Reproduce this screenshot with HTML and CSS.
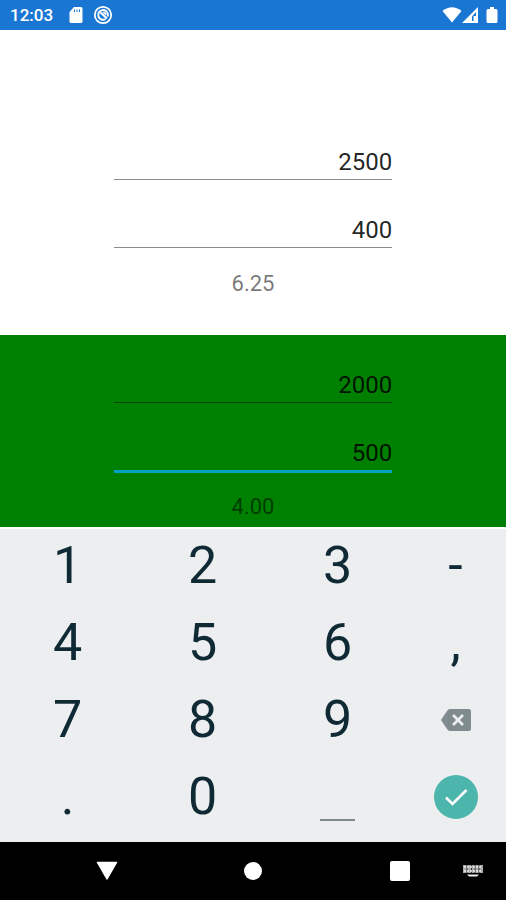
FILE: index.html
```html
<!DOCTYPE html>
<html lang="en">
<head>
<meta charset="utf-8">
<meta name="viewport" content="width=device-width, initial-scale=1">
<title>Division</title>
<link rel="stylesheet" href="styles.css">
</head>
<body>
<header class="status">
  <time class="clock">12:03</time>
  <svg class="status-icon" width="14" height="16" viewBox="0 0 14 16" aria-hidden="true"><path fill="#fff" fill-rule="evenodd" d="M5 0h7q1.500 0 1.500 1.500v13q0 1.500-1.500 1.500H2q-1.500 0-1.500-1.500V5zM5 2.500v2.500h1v-2.500zM7.500 2.500v2.500h1v-2.500zM10 2.500v2.500h1v-2.500z"/></svg>
  <svg class="status-icon" width="20" height="20" viewBox="0 0 20 20" fill="none" stroke="#fff" aria-hidden="true"><circle cx="10" cy="10" r="8.200" stroke-width="1.800"/><path stroke-width="2" d="M12.500 14A4.800 4.800 0 1 1 14.800 10v1.500M7.500 7.500l6.500 6"/><path stroke-width="1.400" d="M10 7.500a2.500 2.500 0 0 1 2.500 2.500"/></svg>
  <span class="spacer"></span>
  <svg width="20" height="16" viewBox="0 0 20 16" aria-hidden="true"><path fill="#fff" d="M10 15.500.500 4Q10-3.500 19.500 4z"/></svg>
  <svg width="16" height="16" viewBox="0 0 16 16" aria-hidden="true"><path fill="#fff" fill-rule="evenodd" d="M16 0v16H0zM14 5l-4 4.500V14h1.500V9H14z"/></svg>
  <svg class="battery" width="12" height="16" viewBox="0 0 12 16" aria-hidden="true"><path fill="#fff" d="M4 0h4v2h2q1.500 0 1.500 1.500v11Q11.500 16 10 16H2Q.500 16 .500 14.500v-11Q.500 2 2 2h2z"/></svg>
</header>
<main class="content">
  <section class="panel panel-plain">
    <input class="field" type="text" inputmode="decimal" value="2500" aria-label="First dividend">
    <input class="field" type="text" inputmode="decimal" value="400" aria-label="First divisor">
    <output class="result">6.25</output>
  </section>
  <section class="panel panel-green">
    <input class="field" type="text" inputmode="decimal" value="2000" aria-label="Second dividend">
    <input class="field field-active" type="text" inputmode="decimal" value="500" aria-label="Second divisor">
    <output class="result">4.00</output>
  </section>
</main>
<div class="keypad">
  <button class="key">1</button><button class="key">2</button><button class="key">3</button><button class="key">-</button>
  <button class="key">4</button><button class="key">5</button><button class="key">6</button><button class="key">,</button>
  <button class="key">7</button><button class="key">8</button><button class="key">9</button>
  <button class="key" aria-label="Delete"><svg width="30" height="22" viewBox="0 0 30 22"><path fill="#7f8b8e" d="M9 0h18.500Q30 0 30 2.500v17q0 2.500-2.500 2.500H9q-1.500 0-2.400-1.300L0 11 6.600 1.300Q7.500 0 9 0z"/><path stroke="#eceef0" stroke-width="2.600" d="M12 6l10 10M22 6L12 16"/></svg></button>
  <button class="key">.</button><button class="key">0</button>
  <button class="key key-space" aria-label="Space"><span class="space-bar"></span></button>
  <button class="key" aria-label="Done"><svg width="44" height="44" viewBox="0 0 44 44"><circle cx="22" cy="22" r="22" fill="#4db6ac"/><path fill="none" stroke="#fff" stroke-width="2.600" d="M12 22.500l6.500 6.500L32.500 15"/></svg></button>
</div>
<nav class="navbar" aria-label="System">
  <button class="nav-button nav-back" aria-label="Back"><svg width="22" height="20" viewBox="0 0 22 20"><path fill="#fff" stroke="#fff" stroke-width="1.500" stroke-linejoin="round" d="M1.500 1.500h19L11 18z"/></svg></button>
  <button class="nav-button" aria-label="Home"><svg width="18" height="18" viewBox="0 0 18 18"><circle cx="9" cy="9" r="9" fill="#fff"/></svg></button>
  <button class="nav-button" aria-label="Recent apps"><svg width="20" height="20" viewBox="0 0 20 20"><rect width="20" height="20" rx="2" fill="#fff"/></svg></button>
  <button class="nav-button" aria-label="Switch keyboard"><svg width="20" height="12" viewBox="0 0 20 12"><path fill="#aaa" d="M0 0h20v8H0z"/><path stroke="#333" stroke-width="1" d="M4 0v8M8.500 0v8M12 0v8M16 0v8"/><path stroke="#eee" stroke-width="1.500" stroke-dasharray="2 1" d="M1 2h18M1 6h18"/><path fill="#eee" d="M4 9.500h12l-2 2H6z"/></svg></button>
</nav>
</body>
</html>
```
FILE: styles.css
```css
* {
  box-sizing: border-box;
}

body {
  margin: 0;
  min-height: 100vh;
  display: flex;
  flex-direction: column;
  background: #fff;
  font-family: Roboto, "Liberation Sans", sans-serif;
}

button {
  border: 0;
  padding: 0;
  background: none;
  font: inherit;
  color: inherit;
}

svg {
  display: block;
}

.status {
  display: flex;
  align-items: center;
  height: 30px;
  padding: 0 8px 0 10px;
  background: #1976d2;
  color: #fff;
}

.clock {
  margin-right: 16px;
  font-size: 17px;
  font-weight: 500;
  line-height: 30px;
}

.status-icon {
  margin-right: 10px;
}

.spacer {
  flex: 1;
}

.battery {
  margin-left: 8px;
}

.content {
  flex: 1;
  display: flex;
  flex-direction: column;
}

.panel {
  display: flex;
  flex-direction: column;
  align-items: center;
}

.panel-plain {
  flex: 1;
  justify-content: flex-end;
  padding-bottom: 31px;
}

.panel-green {
  padding-top: 32px;
  background: #008000;
}

.field {
  width: 55%;
  height: 36px;
  margin-bottom: 32px;
  padding: 0;
  border: 0;
  border-bottom: 1px solid rgba(0, 0, 0, 0.45);
  border-radius: 0;
  outline: 0;
  background: transparent;
  color: rgba(0, 0, 0, 0.87);
  font: 24px Roboto, "Liberation Sans", sans-serif;
  text-align: right;
}

.field:nth-child(2) {
  margin-bottom: 24px;
}

.field.field-active {
  height: 38px;
  margin-bottom: 22px;
  border-bottom: 3px solid #03a1c4;
}

.result {
  height: 32px;
  color: rgba(0, 0, 0, 0.54);
  font-size: 22px;
  line-height: 24px;
}

.keypad {
  display: grid;
  grid-template-columns: 135fr 135fr 135fr 101fr;
  grid-auto-rows: 77px;
  padding-bottom: 5px;
  border-top: 2px solid #fff;
  background: #eceef0;
  color: #102a35;
}

.key {
  display: flex;
  align-items: center;
  justify-content: center;
  padding-bottom: 3px;
  font-size: 52px;
  line-height: 74px;
}

.key-space {
  align-items: flex-end;
  padding-bottom: 16px;
}

.space-bar {
  width: 35px;
  height: 2px;
  background: #7f898d;
}

.navbar {
  display: grid;
  grid-template-columns: 68fr 78fr 214fr 80fr 66fr;
  height: 58px;
  background: #000;
}

.nav-button {
  display: flex;
  align-items: center;
  justify-content: center;
}

.nav-back {
  grid-column: 2;
}
```
